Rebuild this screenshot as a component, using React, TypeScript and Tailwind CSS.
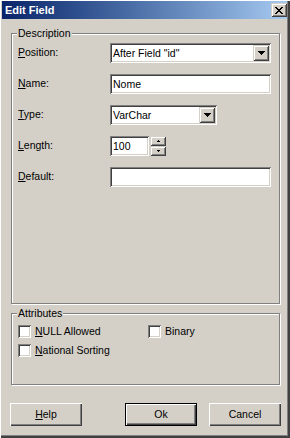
import React from 'react';

// classic win32 bevels
const sunken =
  'bg-white shadow-[inset_1px_1px_0_#808080,inset_-1px_-1px_0_#ffffff,inset_2px_2px_0_#404040,inset_-2px_-2px_0_#d4d0c8]';
const raisedSmall =
  'bg-[#d4d0c8] shadow-[inset_1px_1px_0_#d4d0c8,inset_-1px_-1px_0_#404040,inset_2px_2px_0_#ffffff,inset_-2px_-2px_0_#808080]';
const raised =
  'bg-[#d4d0c8] shadow-[inset_1px_1px_0_#ffffff,inset_-1px_-1px_0_#404040,inset_-2px_-2px_0_#808080]';
const groupBox =
  'border border-[#808080] shadow-[inset_1px_1px_0_#ffffff,1px_1px_0_#ffffff]';

function DownArrow() {
  return (
    <svg width="7" height="4" viewBox="0 0 7 4" shapeRendering="crispEdges">
      <path d="M0 0h7v1h-1v1h-1v1h-1v1h-1v-1h-1v-1h-1v-1h-1z" fill="#000" />
    </svg>
  );
}

function TinyArrow({ up }: { up?: boolean }) {
  return (
    <svg width="3" height="2" viewBox="0 0 3 2" shapeRendering="crispEdges">
      {up ? (
        <path d="M1 0h1v1h1v1h-3v-1h1z" fill="#000" />
      ) : (
        <path d="M0 0h3v1h-1v1h-1v-1h-1z" fill="#000" />
      )}
    </svg>
  );
}

function Combo({ value, width }: { value: string; width: string }) {
  return (
    <div className={`${sunken} ${width} h-[20px] flex p-[2px]`}>
      <span className="flex-1 pl-[1px] leading-[16px] whitespace-nowrap overflow-hidden">{value}</span>
      <div className={`${raisedSmall} w-[16px] flex items-center justify-center`}>
        <DownArrow />
      </div>
    </div>
  );
}

function Label({ first, rest }: { first: string; rest: string }) {
  return (
    <span>
      <span className="underline underline-offset-[1px]">{first}</span>
      {rest}
    </span>
  );
}

function Check({ first, rest }: { first: string; rest: string }) {
  return (
    <div className="flex items-center gap-[4px] h-[13px]">
      <div className={`${sunken} w-[13px] h-[13px] shrink-0`} />
      <span className="leading-[13px]">
        {first && <span className="underline underline-offset-[1px]">{first}</span>}
        {rest}
      </span>
    </div>
  );
}

export default function App() {
  return (
    <div
      className="w-[290px] h-[438px] flex flex-col bg-[#d4d0c8] text-black text-[10.5px] font-['Liberation_Sans',Arial,sans-serif] shadow-[inset_1px_1px_0_#ffffff,inset_-2px_-2px_0_#404040,inset_-3px_-3px_0_#808080]"
    >
      {/* title bar */}
      <div className="mt-[1px] ml-[2px] mr-[3px] h-[18px] flex items-center justify-between pl-[3px] pr-[0px] bg-linear-to-r from-[#0a246a] to-[#a6caf0]">
        <span className="text-white font-bold text-[11px] leading-[14px]">Edit Field</span>
        <div className={`${raisedSmall} w-[16px] h-[14px] flex items-center justify-center`}>
          <svg width="8" height="7" viewBox="0 0 8 7" shapeRendering="crispEdges">
            <path
              d="M0 0h2v1h1v1h2v-1h1v-1h2v1h-1v1h-1v1h-1v1h1v1h1v1h1v1h-2v-1h-1v-1h-2v1h-1v1h-2v-1h1v-1h1v-1h1v-1h-1v-1h-1v-1h-1z"
              fill="#000"
            />
          </svg>
        </div>
      </div>

      {/* body */}
      <div className="flex-1 flex flex-col pl-[10px] pr-[9px]">
        <fieldset className={`${groupBox} mt-[8px] ml-[1px] mr-[1px] pl-[6px] pr-[8px]`}>
          <legend className="ml-[-1px] px-[1px] leading-[12px] bg-[#d4d0c8]">Description</legend>
          <div className="h-[264px] pt-[4px] grid grid-cols-[92px_1fr] auto-rows-[20px] gap-y-[11px] items-center content-start">
            <Label first="P" rest="osition:" />
            <Combo value={'After Field "id"'} width="w-full" />

            <Label first="N" rest="ame:" />
            <div className={`${sunken} h-[20px] w-full px-[3px] leading-[20px]`}>Nome</div>

            <Label first="T" rest="ype:" />
            <Combo value="VarChar" width="w-[107px]" />

            <Label first="L" rest="ength:" />
            <div className="flex gap-[1px] h-[20px]">
              <div className={`${sunken} w-[39px] h-[20px] px-[3px] leading-[20px]`}>100</div>
              <div className="w-[16px] flex flex-col">
                <div className={`${raisedSmall} h-[10px] flex items-center justify-center`}>
                  <TinyArrow up />
                </div>
                <div className={`${raisedSmall} h-[10px] flex items-center justify-center`}>
                  <TinyArrow />
                </div>
              </div>
            </div>

            <Label first="D" rest="efault:" />
            <div className={`${sunken} h-[20px] w-full`} />
          </div>
        </fieldset>

        <fieldset className={`${groupBox} mt-[3px] ml-[1px] mr-[1px] pl-[6px] pr-[8px]`}>
          <legend className="ml-[-1px] px-[1px] leading-[12px] bg-[#d4d0c8]">Attributes</legend>
          <div className="h-[65px] pt-[6px] grid grid-cols-[130px_1fr] auto-rows-[13px] gap-y-[6px] content-start">
            <Check first="N" rest="ULL Allowed" />
            <Check first="" rest="Binary" />
            <Check first="N" rest="ational Sorting" />
          </div>
        </fieldset>

        {/* buttons */}
        <div className="mt-[18px] flex h-[23px]">
          <button className={`${raised} w-[72px] h-[23px] flex items-center justify-center`}>
            <Label first="H" rest="elp" />
          </button>
          <button className="ml-auto w-[72px] h-[23px] border border-black">
            <div className={`${raised} w-full h-full flex items-center justify-center`}>Ok</div>
          </button>
          <button className={`${raised} ml-[12px] w-[72px] h-[23px] flex items-center justify-center`}>
            Cancel
          </button>
        </div>
      </div>
    </div>
  );
}
